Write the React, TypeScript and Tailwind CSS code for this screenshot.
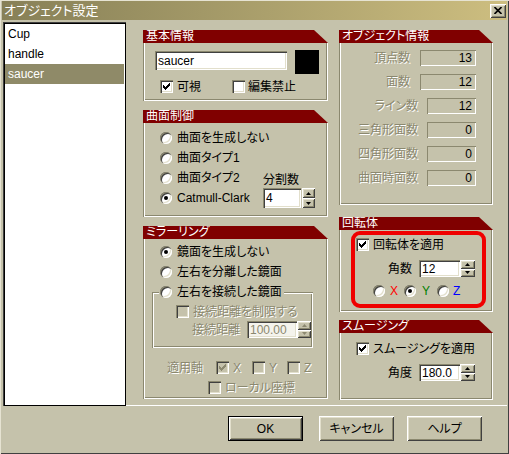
import React from 'react';

const sunken =
  'shadow-[inset_1px_1px_0_#8b886f,inset_2px_2px_0_#404040,inset_-1px_-1px_0_#fff,inset_-2px_-2px_0_#e2dfcc]';
const raised =
  'shadow-[inset_1px_1px_0_#fff,inset_-1px_-1px_0_#404040,inset_2px_2px_0_#e2dfcc,inset_-2px_-2px_0_#8b886f]';
const etched =
  'shadow-[inset_1px_0_0_#8b886f,inset_2px_0_0_#fff,inset_-1px_-1px_0_#fff,inset_-2px_-2px_0_#8b886f]';
const etchedAll =
  'shadow-[inset_1px_1px_0_#8b886f,inset_2px_2px_0_#fff,inset_-1px_-1px_0_#fff,inset_-2px_-2px_0_#8b886f]';
const gray = 'text-[#8b886f] [text-shadow:1px_1px_0_#fff]';

function Header({ title }: { title: string }) {
  return (
    <div className="h-[13px] bg-[#800000] text-white leading-[13px] pl-[3px] [clip-path:polygon(0_0,calc(100%_-_14px)_0,100%_100%,0_100%)]">
      {title}
    </div>
  );
}

function Check({ on, disabled, className = '' }: { on?: boolean; disabled?: boolean; className?: string }) {
  const tops = [2, 3, 4, 3, 2, 1, 0];
  return (
    <span
      className={`w-[13px] h-[13px] shrink-0 flex items-center justify-center ${
        disabled ? 'bg-[#c5c2ab]' : 'bg-white'
      } ${sunken} ${className}`}
    >
      {on && (
        <svg width="7" height="7" viewBox="0 0 7 7" shapeRendering="crispEdges">
          {tops.map((t, i) => (
            <rect key={i} x={i} y={t} width="1" height="3" fill={disabled ? '#8b886f' : '#000'} />
          ))}
        </svg>
      )}
    </span>
  );
}

function Radio({ on, className = '' }: { on?: boolean; className?: string }) {
  return (
    <span
      className={`w-[12px] h-[12px] shrink-0 rounded-full bg-white flex items-center justify-center shadow-[inset_1px_1px_0_#8b886f,inset_2px_2px_0_#404040,inset_-1px_-1px_0_#fff,inset_-2px_-2px_0_#e2dfcc] ${className}`}
    >
      {on && <span className="w-[4px] h-[4px] rounded-full bg-black" />}
    </span>
  );
}

function Field({ value, className = '', disabled }: { value: string; className?: string; disabled?: boolean }) {
  return (
    <div
      className={`${sunken} ${disabled ? 'bg-[#f4f3ec] text-[#8b886f]' : 'bg-white'} flex items-center pl-[3px] ${className}`}
    >
      {value}
    </div>
  );
}

function Spin({ className = '', disabled }: { className?: string; disabled?: boolean }) {
  const c = disabled ? '#8b886f' : '#000';
  return (
    <div className={`flex flex-col ${className}`}>
      <div className={`flex-1 flex items-center justify-center bg-[#c5c2ab] ${raised}`}>
        <svg width="5" height="3" viewBox="0 0 5 3">
          <path d="M2.5 0L5 3H0Z" fill={c} />
        </svg>
      </div>
      <div className={`flex-1 flex items-center justify-center bg-[#c5c2ab] ${raised}`}>
        <svg width="5" height="3" viewBox="0 0 5 3">
          <path d="M0 0H5L2.5 3Z" fill={c} />
        </svg>
      </div>
    </div>
  );
}

function InfoRow({ label, value, wide }: { label: string; value: string; wide?: boolean }) {
  return (
    <div className="h-[24px] flex items-center justify-end pr-[17px]">
      <span className={gray}>{label}</span>
      <div
        className={`h-[16px] flex items-center justify-end pr-[4px] shadow-[inset_1px_1px_0_#8b886f,inset_-1px_-1px_0_#fff] ${
          wide ? 'w-[56px] ml-[10px]' : 'w-[49px] ml-[9px]'
        }`}
      >
        {value}
      </div>
    </div>
  );
}

function Btn({ label, def }: { label: string; def?: boolean }) {
  return (
    <div className={`w-[75px] h-[25px] flex ${def ? 'border border-black' : ''}`}>
      <div className={`flex-1 flex items-center justify-center ${raised}`}>{label}</div>
    </div>
  );
}

export default function App() {
  return (
    <div className="w-[509px] h-[454px] bg-[#c5c2ab] pt-[1px] px-[2px] flex flex-col text-[12px] leading-[14px] text-black whitespace-nowrap font-['Liberation_Sans','Noto_Sans_CJK_JP',sans-serif] [font-feature-settings:'palt'] shadow-[inset_1px_1px_0_#e6e3d2,inset_-1px_-1px_0_#404040] overflow-hidden">
      {/* Title bar */}
      <div className="h-[19px] shrink-0 flex items-center justify-between bg-linear-to-r from-[#878057] to-[#cdbe80] pl-[2px] pr-[1px]">
        <span className="text-white text-[13px]">オブジェクト設定</span>
        <div className={`w-[16px] h-[14px] bg-[#c5c2ab] flex items-center justify-center ${raised}`}>
          <svg width="8" height="7" viewBox="0 0 8 7">
            <path d="M0.5 0L7.5 7M7.5 0L0.5 7" stroke="#000" strokeWidth="1.6" />
          </svg>
        </div>
      </div>

      {/* Body */}
      <div className="h-[386px] shrink-0 flex">
        {/* Object list */}
        <div className="ml-[1px] mt-[2px] w-[123px] h-[384px] bg-white pt-[2px] px-[2px] shadow-[inset_1px_1px_0_#404040,inset_2px_2px_0_#000,inset_-1px_-1px_0_#000]">
          <div className="h-[20px] pl-[3px] flex items-center">Cup</div>
          <div className="h-[20px] pl-[3px] flex items-center">handle</div>
          <div className="h-[20px] pl-[3px] flex items-center bg-[#8f8a68] text-white">saucer</div>
        </div>

        {/* Panels */}
        <div className="flex-1 flex pt-[10px] pl-[17px] gap-[11px] border-b border-white">
          {/* Left column */}
          <div className="w-[185px] flex flex-col">
            <Header title="基本情報" />
            <div className={`h-[58px] ${etched}`}>
              <div className="flex items-start pt-[7px] pl-[12px]">
                <Field value="saucer" className="w-[132px] h-[19px] mt-[1px]" />
                <div className="ml-[8px] w-[24px] h-[24px] bg-black" />
              </div>
              <div className="flex items-center mt-[6px] pl-[17px] h-[13px]">
                <Check on />
                <span className="ml-[4px]">可視</span>
                <Check className="ml-[31px]" />
                <span className="ml-[3px]">編集禁止</span>
              </div>
            </div>

            <div className="mt-[9px]">
              <Header title="曲面制御" />
            </div>
            <div className={`h-[94px] flex ${etched}`}>
              <div className="w-[120px] shrink-0 flex flex-col pl-[17px] pt-[5px]">
                {['曲面を生成しない', '曲面タイプ1', '曲面タイプ2', 'Catmull-Clark'].map((t, i) => (
                  <div key={t} className="h-[20px] flex items-center">
                    <Radio on={i === 3} />
                    <span className="ml-[5px]">{t}</span>
                  </div>
                ))}
              </div>
              <div className="flex flex-col pt-[50px]">
                <span className="h-[15px]">分割数</span>
                <div className="flex">
                  <Field value="4" className="w-[38px] h-[20px]" />
                  <Spin className="w-[13px] h-[20px] ml-[1px]" />
                </div>
              </div>
            </div>

            <div className="mt-[9px]">
              <Header title="ミラーリング" />
            </div>
            <div className={`h-[160px] flex flex-col pt-[3px] ${etched}`}>
              <div className="h-[20px] flex items-center pl-[17px]">
                <Radio on />
                <span className="ml-[5px]">鏡面を生成しない</span>
              </div>
              <div className="h-[20px] flex items-center pl-[17px]">
                <Radio />
                <span className="ml-[5px]">左右を分離した鏡面</span>
              </div>
              <div className={`ml-[9px] mt-[10px] w-[161px] h-[56px] flex flex-col ${etchedAll}`}>
                <div className="-mt-[10px] ml-[7px] h-[20px] w-fit flex items-center bg-[#c5c2ab] pl-[1px] pr-[2px]">
                  <Radio />
                  <span className="ml-[5px]">左右を接続した鏡面</span>
                </div>
                <div className="mt-[3px] h-[13px] flex items-center pl-[24px]">
                  <Check disabled />
                  <span className={`ml-[4px] ${gray}`}>接続距離を制限する</span>
                </div>
                <div className="mt-[3px] flex items-center pl-[40px]">
                  <span className={`w-[48px] ${gray}`}>接続距離</span>
                  <Field value="100.00" disabled className="ml-[7px] w-[50px] h-[17px]" />
                  <Spin disabled className="w-[14px] h-[17px]" />
                </div>
              </div>
              <div className="mt-[13px] h-[13px] flex items-center pl-[24px]">
                <span className={`w-[48px] ${gray}`}>適用軸</span>
                <Check on disabled className="ml-[1px]" />
                <span className={`ml-[4px] ${gray}`}>X</span>
                <Check disabled className="ml-[11px]" />
                <span className={`ml-[4px] ${gray}`}>Y</span>
                <Check disabled className="ml-[10px]" />
                <span className={`ml-[4px] ${gray}`}>Z</span>
              </div>
              <div className="mt-[7px] h-[13px] flex items-center pl-[65px]">
                <Check disabled />
                <span className={`ml-[4px] ${gray}`}>ローカル座標</span>
              </div>
            </div>
          </div>

          {/* Right column */}
          <div className="w-[154px] flex flex-col">
            <Header title="オブジェクト情報" />
            <div className={`h-[162px] pt-[3px] ${etched}`}>
              <InfoRow label="頂点数" value="13" wide />
              <InfoRow label="面数" value="12" wide />
              <InfoRow label="ライン数" value="12" />
              <InfoRow label="三角形面数" value="0" />
              <InfoRow label="四角形面数" value="0" />
              <InfoRow label="曲面時面数" value="0" />
            </div>

            <div className="mt-[12px]">
              <Header title="回転体" />
            </div>
            <div className={`h-[82px] ${etched}`}>
              <div className="mt-[1px] ml-[12px] w-[135px] h-[77px] border-4 border-[#f00000] rounded-[9px] flex flex-col">
                <div className="mt-[3px] h-[13px] flex items-center pl-[1px]">
                  <Check on />
                  <span className="ml-[4px]">回転体を適用</span>
                </div>
                <div className="mt-[9px] flex items-center pl-[33px]">
                  <span className="w-[24px]">角数</span>
                  <Field value="12" className="ml-[7px] w-[41px] h-[17px]" />
                  <Spin className="w-[15px] h-[17px]" />
                </div>
                <div className="mt-[8px] h-[12px] flex items-center pl-[18px]">
                  <Radio />
                  <span className="ml-[5px] w-[8px] text-[#ff0000]">X</span>
                  <Radio on className="ml-[6px]" />
                  <span className="ml-[6px] w-[8px] text-[#008000]">Y</span>
                  <Radio className="ml-[7px]" />
                  <span className="ml-[4px] text-[#0000ff]">Z</span>
                </div>
              </div>
            </div>

            <div className="mt-[8px]">
              <Header title="スムージング" />
            </div>
            <div className={`h-[67px] flex flex-col ${etched}`}>
              <div className="mt-[9px] h-[13px] flex items-center pl-[17px]">
                <Check on />
                <span className="ml-[4px]">スムージングを適用</span>
              </div>
              <div className="mt-[9px] flex items-center pl-[49px]">
                <span className="w-[24px]">角度</span>
                <Field value="180.0" className="ml-[7px] w-[41px] h-[17px]" />
                <Spin className="w-[15px] h-[17px]" />
              </div>
            </div>
          </div>
        </div>
      </div>

      {/* Buttons */}
      <div className="mt-[10px] flex justify-end pr-[25px]">
        <Btn label="OK" def />
        <div className="ml-[16px]">
          <Btn label="キャンセル" />
        </div>
        <div className="ml-[13px]">
          <Btn label="ヘルプ" />
        </div>
      </div>
    </div>
  );
}
